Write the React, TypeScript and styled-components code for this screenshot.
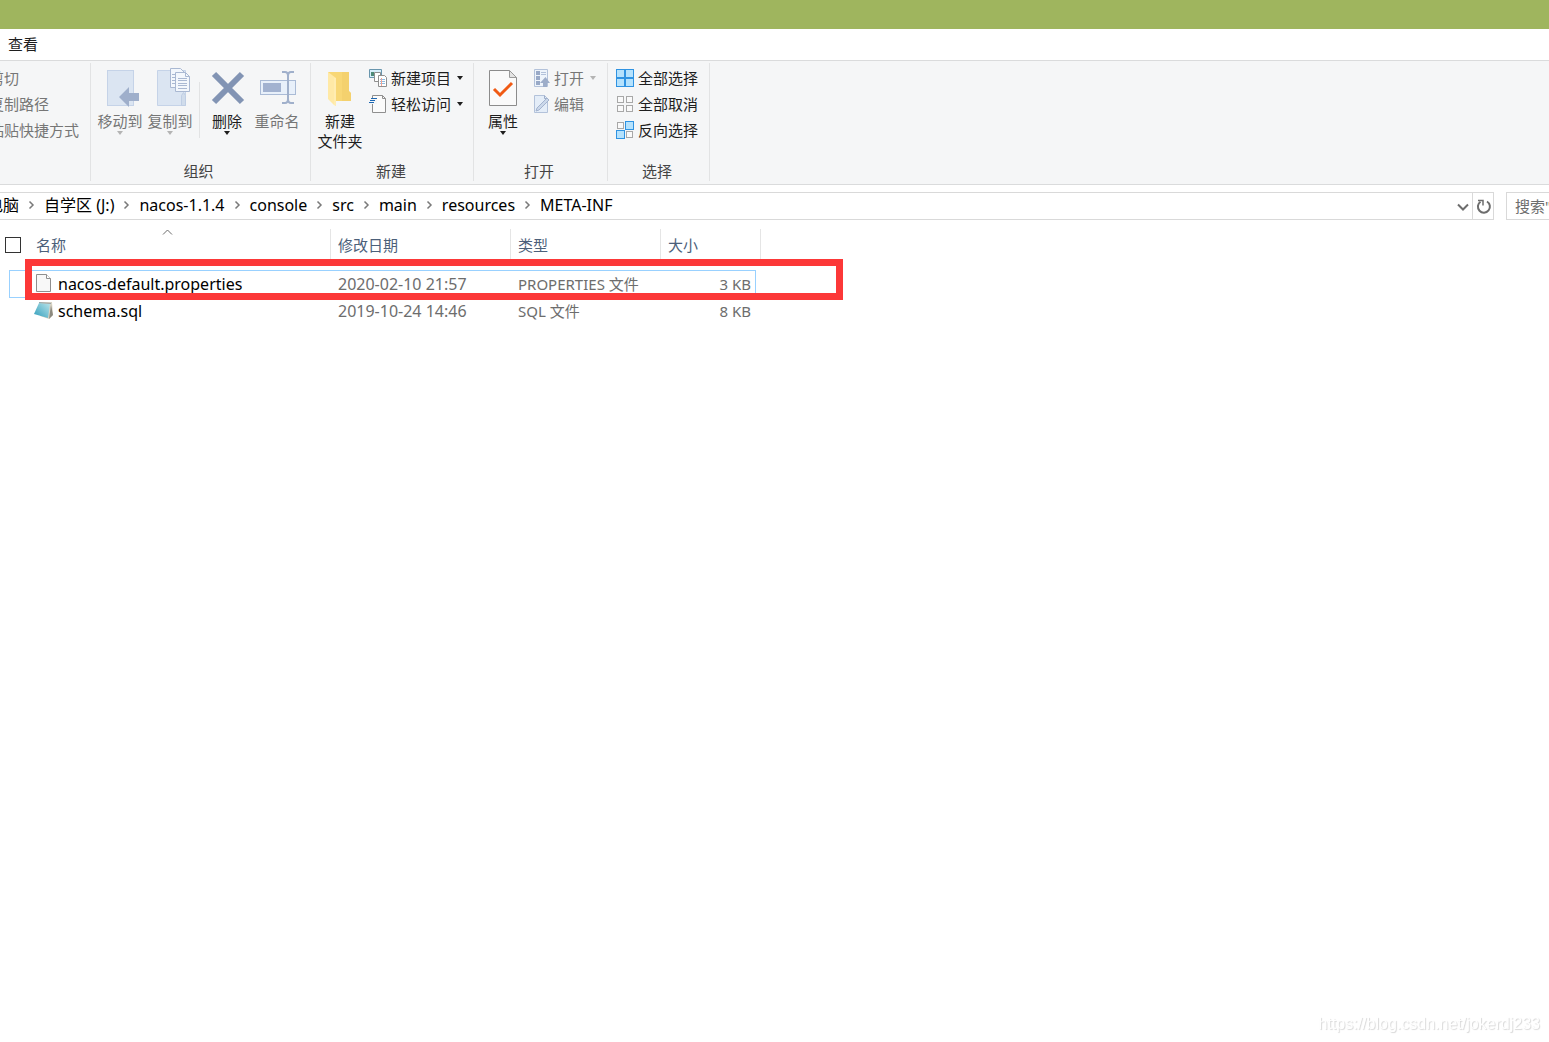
import React from "react";
import styled, { createGlobalStyle } from "styled-components";

const GlobalStyle = createGlobalStyle`
  * { box-sizing: border-box; }
  body {
    margin: 0;
    background: #fff;
    color: #1e1e1e;
    font: 15px/20px "Noto Sans", "Noto Sans CJK SC", sans-serif;
    overflow: hidden;
  }
  button, input { font: inherit; color: inherit; }
`;

const Window = styled.div`
  min-height: 100vh;
  display: flex;
  flex-direction: column;
`;

const TitleBar = styled.header`
  height: 29px;
  background: #9fb55e;
`;

const TabBar = styled.nav`
  display: flex;
  height: 31px;
`;

const Tab = styled.button`
  border: 0;
  background: none;
  padding: 0 8px 2px;
`;

const Ribbon = styled.div`
  display: flex;
  height: 125px;
  padding: 2px 0 3px;
  background: #f5f6f7;
  border-top: 1px solid #dadbdc;
  border-bottom: 1px solid #dadbdc;
  overflow: hidden;
`;

const Group = styled.section<{ $start: number; $end: number }>`
  display: flex;
  flex-direction: column;
  justify-content: space-between;
  flex: none;
  padding: 2px ${(p) => p.$end}px 0 ${(p) => p.$start}px;
  border-right: 1px solid #e2e3e4;
`;

const ClippedGroup = styled(Group)`
  margin-left: -16px;
`;

const GroupBody = styled.div`
  display: flex;
`;

const GroupLabel = styled.div`
  text-align: center;
  color: #444;
`;

const Column = styled.div`
  display: flex;
  flex-direction: column;
  align-items: flex-start;
`;

const BigButton = styled.button`
  display: flex;
  flex-direction: column;
  align-items: center;
  width: 50px;
  height: 86px;
  padding: 0;
  border: 0;
  background: none;
  white-space: nowrap;
  &:disabled { color: #767676; }
`;

const BigIcon = styled.svg`
  width: 40px;
  height: 44px;
  margin-bottom: 2px;
  flex: none;
`;

const SmallButton = styled.button`
  display: flex;
  align-items: center;
  gap: 4px;
  height: 26px;
  padding: 0 4px;
  border: 0;
  background: none;
  white-space: nowrap;
  &:disabled { color: #767676; }
`;

const SmallIcon = styled.svg`
  width: 18px;
  height: 18px;
  flex: none;
`;

const Arrow = styled.span`
  flex: none;
  border: 3px solid transparent;
  border-top: 4px solid currentColor;
  border-bottom: 0;
  ${SmallButton} & { margin-left: 2px; }
  ${SmallButton}:disabled &, ${BigButton}:disabled & { border-top-color: #b4b4b4; }
`;

const Divider = styled.div`
  width: 1px;
  height: 56px;
  margin: 17px 2px 0 4px;
  background: #e2e3e4;
`;

const AddressRow = styled.div`
  display: flex;
  gap: 12px;
  height: 28px;
  margin-top: 7px;
`;

const Address = styled.div`
  flex: 1;
  display: flex;
  border: 1px solid #d9d9d9;
  border-left: 0;
  min-width: 0;
`;

const Crumbs = styled.ol`
  flex: 1;
  display: flex;
  align-items: center;
  margin: 0 0 0 -29px;
  padding: 0 0 2px;
  list-style: none;
  font-size: 16px;
  color: #000;
  white-space: nowrap;
`;

const Crumb = styled.li`
  display: flex;
  align-items: center;
`;

const CrumbLink = styled.a`
  color: inherit;
  text-decoration: none;
`;

const Chevron = styled.svg`
  width: 7px;
  height: 10px;
  margin: 0 9px;
`;

const IconButton = styled.button<{ $line?: boolean }>`
  display: flex;
  align-items: center;
  justify-content: center;
  width: 21px;
  padding: 2px 0 0 2px;
  border: 0;
  border-left: ${(p) => (p.$line ? "1px solid #d9d9d9" : "0")};
  background: none;
`;

const Search = styled.input`
  width: 43px;
  border: 1px solid #d9d9d9;
  border-right: 0;
  padding: 0 0 0 8px;
  background: #fff;
  outline: 0;
  &::placeholder { color: #6d6d6d; opacity: 1; }
`;

const Files = styled.main`
  position: relative;
  margin-top: 9px;
`;

const Table = styled.table`
  width: 761px;
  border-collapse: collapse;
  table-layout: fixed;
`;

const Head = styled.th`
  padding: 0 0 11px;
  font-weight: 400;
  text-align: left;
  color: #4c607a;
`;

const HeadCell = styled.div<{ $line?: boolean }>`
  position: relative;
  display: flex;
  align-items: center;
  height: 31px;
  padding-left: 7px;
  border-right: ${(p) => (p.$line ? "1px solid #e5e5e5" : "0")};
`;

const SortMark = styled.svg`
  position: absolute;
  top: 0;
  left: 133px;
  width: 11px;
  height: 6px;
`;

const CheckBox = styled.input`
  appearance: none;
  width: 16px;
  height: 16px;
  margin: 0 0 0 -2px;
  border: 1px solid #333;
  background: #fff;
`;

const Row = styled.tr<{ $focused?: boolean }>`
  position: relative;
  height: 27px;
  &::after {
    content: "";
    display: ${(p) => (p.$focused ? "block" : "none")};
    position: absolute;
    inset: -1px 5px 0 9px;
    border: 1px solid #99d1ff;
  }
`;

const Cell = styled.td<{ $right?: boolean; $large?: boolean }>`
  padding: 0 ${(p) => (p.$right ? 10 : 0)}px 2px 7px;
  font-size: ${(p) => (p.$large ? 16 : 15)}px;
  color: #6d6d6d;
  text-align: ${(p) => (p.$right ? "right" : "left")};
  white-space: nowrap;
`;

const FileName = styled.div`
  display: flex;
  align-items: center;
  gap: 4px;
  margin-left: -2px;
  color: #000;
`;

const FileIcon = styled.svg`
  width: 20px;
  height: 20px;
`;

const Highlight = styled.div`
  position: absolute;
  top: 30px;
  left: 25px;
  width: 818px;
  height: 41px;
  border: 7px solid #fc3838;
  pointer-events: none;
`;

const Watermark = styled.a`
  position: fixed;
  right: 9px;
  bottom: 8px;
  font: 16px/20px "Liberation Sans", sans-serif;
  color: #fff;
  text-shadow: 1px 1px 1px #d8d8d8;
  text-decoration: none;
`;

const MoveIcon = () => (
  <BigIcon viewBox="0 0 40 44">
    <rect x="7.5" y="5.5" width="26" height="35" fill="#dbe5f2" stroke="#c5d3e8" />
    <path d="M19 32l10-10v6h10v8h-10v6z" fill="#9fafcb" />
  </BigIcon>
);

const CopyIcon = () => (
  <BigIcon viewBox="0 0 40 44">
    <path d="M7.5 5.5h28v35h-28z" fill="#dbe5f2" stroke="#c5d3e8" />
    <path d="M31.500 40.500v-10l2-3 2 3v10z" fill="#d0dceb" stroke="#bfcee4" />
    <path d="M20.500 3.500h10l4 4v15h-14z" fill="#f3f7fc" stroke="#a9b8d2" />
    <path d="M22 9.500h4M22 12.500h4M22 15.500h4M22 18.500h4" stroke="#a9b8d2" />
    <path d="M25.500 7.500h10l4 4v15h-14z" fill="#f3f7fc" stroke="#a9b8d2" />
    <path d="M35.500 7.500v4h4M28 13.500h9M28 15.500h9M28 18.500h9M28 20.500h9M28 23.500h9" fill="none" stroke="#a9b8d2" />
  </BigIcon>
);

const DeleteIcon = () => (
  <BigIcon viewBox="0 0 40 44">
    <path d="M7 9l28 28M35 9L7 37" stroke="#8294b4" strokeWidth="6" />
  </BigIcon>
);

const RenameIcon = () => (
  <BigIcon viewBox="0 0 40 44">
    <rect x="3.500" y="15.500" width="35" height="14" fill="#e8f0fa" stroke="#aabbd6" />
    <path d="M6 18h18v9H6z" fill="#a2b2d0" />
    <path d="M31 10v25" stroke="#a0b0cb" strokeWidth="2" />
    <path d="M25 7h3q3 0 3 4 0-4 3-4h3M25 38h3q3 0 3-4 0 4 3 4h3" fill="none" stroke="#a0b0cb" strokeWidth="2" />
  </BigIcon>
);

const FolderIcon = () => (
  <BigIcon viewBox="0 0 40 44">
    <path d="M8 7h21v19l2 2v8H16z" fill="#f8d775" />
    <path d="M22 7h7v19l2 2v8h-9z" fill="#efc967" opacity=".45" />
    <path d="M8 7l8 6v28l-2-1-6-6z" fill="#ffe9a6" />
    <path d="M15 13v27" stroke="#fff0bd" />
  </BigIcon>
);

const PropertiesIcon = () => (
  <BigIcon viewBox="0 0 40 44">
    <path d="M6.500 5.500h20l7 7v28h-27z" fill="#fafafa" stroke="#8c8c8c" />
    <path d="M26.500 5.500v7h7z" fill="#e4e4e4" stroke="#9a9a9a" />
    <path d="M11 24l6 6 12-12" fill="none" stroke="#f05a14" strokeWidth="3" />
  </BigIcon>
);

const NewItemIcon = () => (
  <SmallIcon viewBox="0 0 18 18">
    <path d="M.5.5h12v8h-12z" fill="#d7effb" stroke="#6996ae" />
    <path d="M2 3h3v4H2z" fill="#4e8a78" />
    <path d="M5.500 3.500h6v9h-6z" fill="#fff" stroke="#8f8f8f" />
    <path d="M9.500 6.500h6l2 2v9h-8z" fill="#fff" stroke="#8f8f8f" />
    <path d="M11 10.500h5M11 12.500h5M11 14.500h5" stroke="#8ebbe0" />
    <path d="M12.500 9v8" stroke="#f2a394" />
  </SmallIcon>
);

const EasyAccessIcon = () => (
  <SmallIcon viewBox="0 0 18 18">
    <path d="M3.500.5h10l3 3v14h-13z" fill="#fbfbfb" stroke="#8f8f8f" />
    <path d="M13.500.5v3h3" fill="none" stroke="#8f8f8f" />
    <path d="M1 3h7v6H0z" fill="#f5f6f7" />
    <path d="M2 3.500h6M1 5.500h5M0 7.500h5" stroke="#1c67b2" />
  </SmallIcon>
);

const OpenIcon = () => (
  <SmallIcon viewBox="0 0 18 18">
    <path d="M2.500.5h13v17h-13z" fill="#eef4fb" stroke="#b3c2da" />
    <path d="M4 2h4v4H4zM4 7h4v4H4zM4 12h4v4H4z" fill="#98a9c7" />
    <path d="M9 3.500h5M9 5.500h5" stroke="#b3c2da" />
    <path d="M8 14l5.500-6 4.500 6h-3v4h-4v-4z" fill="#9dadc9" />
  </SmallIcon>
);

const EditIcon = () => (
  <SmallIcon viewBox="0 0 18 18">
    <path d="M2.500.5h10l3 3v14h-13z" fill="#e4edf8" stroke="#b3c2da" />
    <path d="M12.500.5v3h3" fill="none" stroke="#9dadc9" />
    <path d="M4 16l1-3L15 3l2 2L7 15z" fill="#cbd8ea" stroke="#a3b3cf" />
  </SmallIcon>
);

const ALL_ON = [true, true, true, true];
const ALL_OFF = [false, false, false, false];
const INVERTED = [false, true, true, false];

const TilesIcon = ({ on }: { on: boolean[] }) => (
  <SmallIcon viewBox="0 0 18 18">
    {on.map((filled, i) => (
      <rect
        key={i}
        x={(i % 2) * 9 + (filled ? 0.5 : 1.5)}
        y={Math.floor(i / 2) * 9 + (filled ? 0.5 : 1.5)}
        width={filled ? 8 : 6}
        height={filled ? 8 : 6}
        fill={filled ? "#b5e2fd" : "#fafafa"}
        stroke={filled ? "#2f93e2" : "#a8a8a8"}
      />
    ))}
  </SmallIcon>
);

const PageIcon = () => (
  <FileIcon viewBox="0 0 20 20">
    <path d="M2.500.5h10l4 4v13h-14z" fill="#f8f8f8" stroke="#8f8f8f" />
    <path d="M12.500.5v4h4" fill="#fff" stroke="#8f8f8f" />
  </FileIcon>
);

const SqlIcon = () => (
  <FileIcon viewBox="0 0 20 20">
    <defs>
      <linearGradient id="note" x1="0" y1="1" x2="1" y2="0">
        <stop offset="0" stopColor="#2f9dbb" />
        <stop offset="1" stopColor="#b9e4ea" />
      </linearGradient>
    </defs>
    <path d="M6 1h12l1 13-4 4-9-3z" fill="#d8d3c4" />
    <path d="M17 4l2 10-4 4z" fill="#8c8a80" />
    <path d="M5 2l11 1-2 14-14-4z" fill="url(#note)" />
    <path d="M5 1.500l12 1" stroke="#9ba6a8" />
  </FileIcon>
);

const crumbs = ["此电脑", "自学区 (J:)", "nacos-1.1.4", "console", "src", "main", "resources", "META-INF"];

const files = [
  { name: "nacos-default.properties", date: "2020-02-10 21:57", type: "PROPERTIES 文件", size: "3 KB", icon: <PageIcon />, focused: true },
  { name: "schema.sql", date: "2019-10-24 14:46", type: "SQL 文件", size: "8 KB", icon: <SqlIcon />, focused: false },
];

export default function App() {
  return (
    <Window>
      <GlobalStyle />
      <TitleBar />
      <TabBar>
        <Tab type="button">查看</Tab>
      </TabBar>

      <Ribbon>
        <ClippedGroup $start={1} $end={7}>
          <Column>
            <SmallButton type="button" disabled>剪切</SmallButton>
            <SmallButton type="button" disabled>复制路径</SmallButton>
            <SmallButton type="button" disabled>粘贴快捷方式</SmallButton>
          </Column>
        </ClippedGroup>

        <Group $start={4} $end={8}>
          <GroupBody>
            <BigButton type="button" disabled><MoveIcon />移动到<Arrow /></BigButton>
            <BigButton type="button" disabled><CopyIcon />复制到<Arrow /></BigButton>
            <Divider />
            <BigButton type="button"><DeleteIcon />删除<Arrow /></BigButton>
            <BigButton type="button" disabled><RenameIcon />重命名</BigButton>
          </GroupBody>
          <GroupLabel>组织</GroupLabel>
        </Group>

        <Group $start={4} $end={6}>
          <GroupBody>
            <BigButton type="button"><FolderIcon />新建<br />文件夹</BigButton>
            <Column>
              <SmallButton type="button"><NewItemIcon />新建项目<Arrow /></SmallButton>
              <SmallButton type="button"><EasyAccessIcon />轻松访问<Arrow /></SmallButton>
            </Column>
          </GroupBody>
          <GroupLabel>新建</GroupLabel>
        </Group>

        <Group $start={4} $end={7}>
          <GroupBody>
            <BigButton type="button"><PropertiesIcon />属性<Arrow /></BigButton>
            <Column>
              <SmallButton type="button" disabled><OpenIcon />打开<Arrow /></SmallButton>
              <SmallButton type="button" disabled><EditIcon />编辑</SmallButton>
            </Column>
          </GroupBody>
          <GroupLabel>打开</GroupLabel>
        </Group>

        <Group $start={4} $end={7}>
          <Column>
            <SmallButton type="button"><TilesIcon on={ALL_ON} />全部选择</SmallButton>
            <SmallButton type="button"><TilesIcon on={ALL_OFF} />全部取消</SmallButton>
            <SmallButton type="button"><TilesIcon on={INVERTED} />反向选择</SmallButton>
          </Column>
          <GroupLabel>选择</GroupLabel>
        </Group>
      </Ribbon>

      <AddressRow>
        <Address>
          <Crumbs>
            {crumbs.map((name, i) => (
              <Crumb key={name}>
                {i > 0 && (
                  <Chevron viewBox="0 0 7 10">
                    <path d="M1.500 1.500L5 5 1.500 8.500" fill="none" stroke="#7a7a7a" strokeWidth="1.500" />
                  </Chevron>
                )}
                <CrumbLink href="#">{name}</CrumbLink>
              </Crumb>
            ))}
          </Crumbs>
          <IconButton type="button" aria-label="展开">
            <svg width="12" height="8" viewBox="0 0 12 8">
              <path d="M1 1.500l5 5 5-5" fill="none" stroke="#6d6d6d" strokeWidth="2" />
            </svg>
          </IconButton>
          <IconButton type="button" $line aria-label="刷新">
            <svg width="16" height="16" viewBox="0 0 16 16">
              <path d="M11 2.500a6 6 0 1 1-6.500.2" fill="none" stroke="#6d6d6d" strokeWidth="2" />
              <path d="M2 1.500h5v5" fill="none" stroke="#6d6d6d" strokeWidth="1.500" />
            </svg>
          </IconButton>
        </Address>
        <Search aria-label="搜索" placeholder={'搜索"META-INF"'} />
      </AddressRow>

      <Files>
        <Table>
          <colgroup>
            <col style={{ width: 29 }} />
            <col style={{ width: 302 }} />
            <col style={{ width: 180 }} />
            <col style={{ width: 150 }} />
            <col style={{ width: 100 }} />
          </colgroup>
          <thead>
            <tr>
              <Head><HeadCell><CheckBox type="checkbox" aria-label="全选" /></HeadCell></Head>
              <Head>
                <HeadCell $line>
                  名称
                  <SortMark viewBox="0 0 11 6">
                    <path d="M1 5.500L5.500 1 10 5.500" fill="none" stroke="#6d6d6d" />
                  </SortMark>
                </HeadCell>
              </Head>
              <Head><HeadCell $line>修改日期</HeadCell></Head>
              <Head><HeadCell $line>类型</HeadCell></Head>
              <Head><HeadCell $line>大小</HeadCell></Head>
            </tr>
          </thead>
          <tbody>
            {files.map((f) => (
              <Row key={f.name} $focused={f.focused}>
                <Cell />
                <Cell $large><FileName>{f.icon}{f.name}</FileName></Cell>
                <Cell $large>{f.date}</Cell>
                <Cell>{f.type}</Cell>
                <Cell $right>{f.size}</Cell>
              </Row>
            ))}
          </tbody>
        </Table>
        <Highlight />
      </Files>

      <Watermark href="https://blog.csdn.net/jokerdj233">https://blog.csdn.net/jokerdj233</Watermark>
    </Window>
  );
}
